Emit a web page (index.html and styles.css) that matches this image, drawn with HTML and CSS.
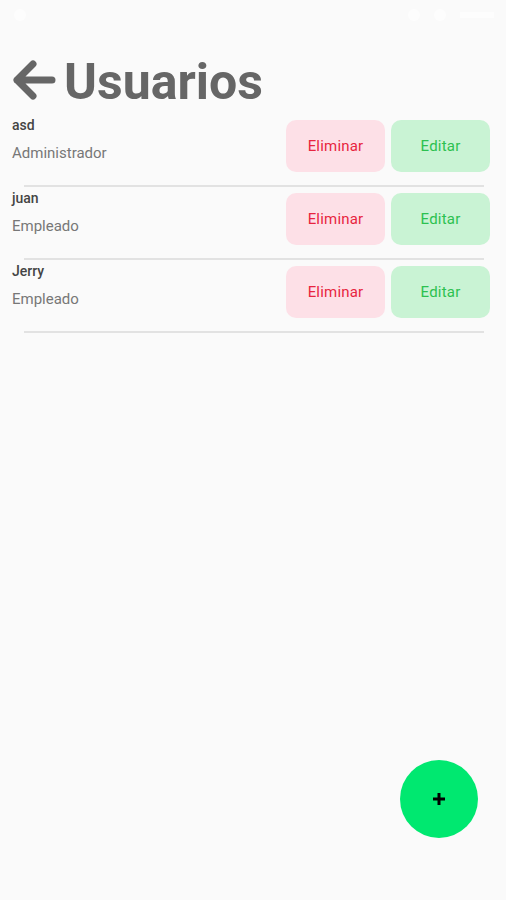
FILE: index.html
```html
<!doctype html>
<html>
<head>
<meta charset="utf-8">
<title>Usuarios</title>
<link rel="stylesheet" href="styles.css">
</head>

<body>
<div class="status_bar">
	<span class="dot"></span>
	<span class="icons"><span class="dot"></span><span class="dot"></span><span class="bat"></span></span>
</div>

<div class="header">
	<svg class="back" width="44" height="40" viewBox="0 0 44 40">
		<path d="M40 20 H5 M21 4 L5 20 L21 36" fill="none" stroke="#666" stroke-width="7" stroke-linecap="round" stroke-linejoin="round"/>
	</svg>
	<h1 class="title">Usuarios</h1>
</div>

<ul class="user_list">
	<li class="row">
		<div class="info">
			<div class="name">asd</div>
			<div class="role">Administrador</div>
		</div>
		<div class="btns">
			<span class="btn del">Eliminar</span>
			<span class="btn edit">Editar</span>
		</div>
	</li>
	<li class="line"></li>
	<li class="row">
		<div class="info">
			<div class="name">juan</div>
			<div class="role">Empleado</div>
		</div>
		<div class="btns">
			<span class="btn del">Eliminar</span>
			<span class="btn edit">Editar</span>
		</div>
	</li>
	<li class="line"></li>
	<li class="row">
		<div class="info">
			<div class="name">Jerry</div>
			<div class="role">Empleado</div>
		</div>
		<div class="btns">
			<span class="btn del">Eliminar</span>
			<span class="btn edit">Editar</span>
		</div>
	</li>
	<li class="line"></li>
</ul>

<div class="fab">
	<svg width="14" height="14" viewBox="0 0 14 14"><path d="M7 1 V13 M1 7 H13" stroke="#000" stroke-width="3"/></svg>
</div>
</body>
</html>
```

FILE: styles.css
```css
*{ padding:0; margin:0;}
ul{ list-style:none;}
body{ background-color:#fafafa; font-family:Roboto, "Noto Sans", sans-serif; width:506px; height:900px; position:relative; overflow:hidden;}

.status_bar{ height:30px; display:flex; justify-content:space-between; align-items:center; padding:0 12px 0 14px;}
.status_bar .dot{ display:inline-block; width:12px; height:12px; border-radius:6px; background-color:#fdfdfd;}
.status_bar .icons{ display:flex; gap:14px; align-items:center;}
.status_bar .bat{ display:inline-block; width:34px; height:6px; background-color:#fdfdfd;}

.header{ display:flex; align-items:center; gap:8px; padding:24px 0 0 12px;}
.back{ margin-bottom:4px;}
.title{ font-size:50px; line-height:56px; font-weight:700; color:#666;}

.user_list{ padding-top:10px;}
.row{ display:flex; justify-content:space-between; align-items:flex-start; padding:0 16px 0 12px;}
.info{ margin-top:-3px;}
.name{ font-size:14px; line-height:16px; font-weight:500; color:#444;}
.role{ font-size:15px; line-height:20px; color:#777; margin-top:10px;}
.btns{ display:flex; gap:6px;}
.btn{ display:flex; width:99px; height:52px; border-radius:10px; align-items:center; justify-content:center; font-size:15px; letter-spacing:0.2px;}
.del{ background-color:#fde0e7; color:#e8253f;}
.edit{ background-color:#c9f3d4; color:#2cc150;}
.line{ height:2px; background-color:#e2e2e2; margin:13px 22px 6px 24px;}

.fab{ position:absolute; right:28px; bottom:62px; width:78px; height:78px; border-radius:50%; background-color:#00e870; display:flex; align-items:center; justify-content:center;}
```
